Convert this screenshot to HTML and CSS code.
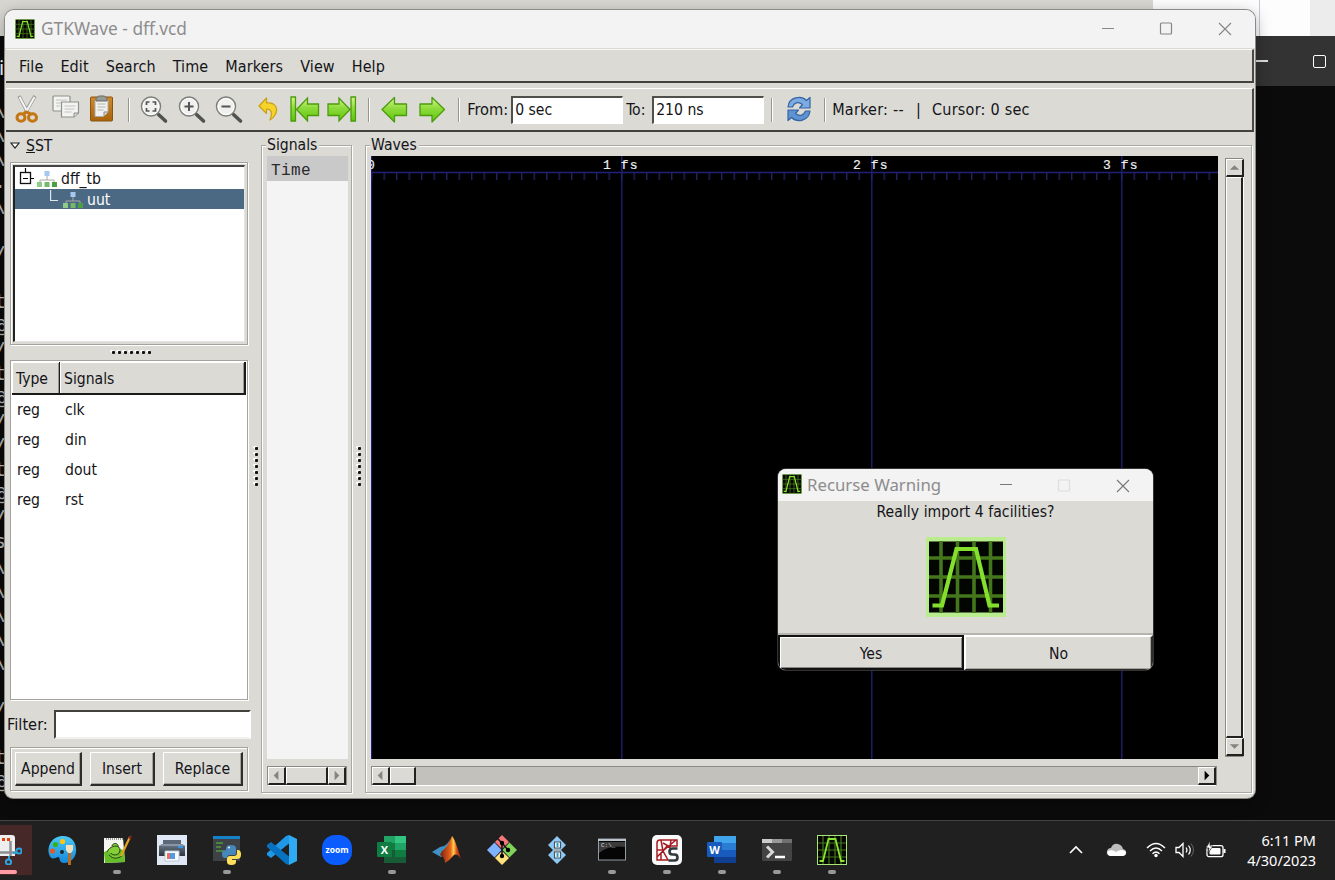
FILE: index.html
```html
<!DOCTYPE html>
<html lang="en">
<head>
<meta charset="utf-8">
<title>GTKWave - dff.vcd</title>
<link rel="stylesheet" href="styles.css">
</head>
<body>
<svg class="defs" width="0" height="0">
  <defs>
    <linearGradient id="green" x1="0" y1="0" x2="0" y2="1"><stop offset="0" stop-color="#d8f58a"/><stop offset=".45" stop-color="#8edb3c"/><stop offset="1" stop-color="#5fc40c"/></linearGradient>
    <linearGradient id="brown" x1="0" y1="0" x2="0" y2="1"><stop offset="0" stop-color="#d08a2c"/><stop offset="1" stop-color="#a8640c"/></linearGradient>
    <linearGradient id="steel" x1="0" y1="0" x2="0" y2="1"><stop offset="0" stop-color="#6e7a88"/><stop offset="1" stop-color="#2c3642"/></linearGradient>
    <linearGradient id="flame" x1="0" y1="0" x2="1" y2="0"><stop offset="0" stop-color="#7a1d10"/><stop offset=".5" stop-color="#e8641c"/><stop offset=".65" stop-color="#ffd04a"/><stop offset=".8" stop-color="#d8481c"/><stop offset="1" stop-color="#8e1c14"/></linearGradient>
    <linearGradient id="sky" x1="0" y1="0" x2="0" y2="1"><stop offset="0" stop-color="#4cc8f4"/><stop offset="1" stop-color="#1688dc"/></linearGradient>
    <symbol id="wave" viewBox="0 0 80 80">
      <rect width="80" height="80" fill="#b9ec8c"/><rect x="3" y="4.500" width="74" height="71" fill="#030600"/>
      <path d="M15 4v72M31.500 4v72M48 4v72M64.500 4v72M3 21h74M3 40h74M3 59h74" stroke="#44761c" stroke-width="3.600"/>
      <path d="M6.500 68.500H16L30.500 12H50L63.500 68.500H73" fill="none" stroke="#84e02c" stroke-width="4.200"/>
    </symbol>
    <symbol id="wave-small" viewBox="0 0 30 30">
      <rect width="30" height="30" fill="#a8e478"/><rect x="1" y="1" width="28" height="28" fill="#050800"/>
      <path d="M6 1v28M12 1v28M18 1v28M24 1v28M1 8h28M1 15h28M1 22h28" stroke="#47751e" stroke-width="1.200"/>
      <path d="M2.500 26H6L11.500 4H18.500L24 26H27.500" fill="none" stroke="#86e52c" stroke-width="1.800"/>
    </symbol>
    <symbol id="tree" viewBox="0 0 20 18">
      <path d="M10 6v4M3 12v-2h14v2" fill="none" stroke="#a8a8a0" stroke-width="1"/>
      <rect x="7.500" y="1" width="5" height="5" fill="#a4c8f0"/>
      <rect x="0" y="12" width="5" height="5" fill="#8ecb86"/><rect x="7.500" y="12" width="5" height="5" fill="#74b86a"/><rect x="15" y="12" width="5" height="5" fill="#4c9e44"/>
    </symbol>
    <symbol id="lens" viewBox="0 0 30 30">
      <path d="M19.500 19.500l7 6.500" stroke="#505450" stroke-width="3.600" stroke-linecap="round"/>
      <circle cx="12" cy="11.500" r="9.500" fill="#f0f0ee" stroke="#7c7f7a" stroke-width="1.500"/>
      <circle cx="12" cy="11.500" r="8" fill="none" stroke="#fff"/>
    </symbol>
    <symbol id="arrow" viewBox="0 0 30 30"><path d="M2 14.500L14.500 2.500V9H26.500V20.500H14.500V27Z" fill="url(#green)" stroke="#4a9c0c" stroke-width="1.300" stroke-linejoin="round"/></symbol>
    <symbol id="edge" viewBox="0 0 30 30"><path d="M1 2h4.500v24H1zM6.500 14.500L17.500 3V9H28.500V20.500H17.500V26Z" fill="url(#green)" stroke="#4a9c0c" stroke-width="1.300"/></symbol>
  </defs>
</svg>

<div class="desktop">
  <div class="sheet"><span class="sheet-line"></span><span class="sheet-edge"></span></div>
  <div class="console">
    <div class="console-bar"><i class="c-min"></i><i class="c-max"></i></div>
    <div class="console-tab">i</div>
    <pre class="console-text">\
\
\
.
\

/

t
@
/
t
@
/
/
t
@
/
s
\
\
\
\
\

/

t
@</pre>
  </div>

  <main class="window">
    <header class="titlebar">
      <svg class="app-icon"><use href="#wave-small"/></svg>
      <span class="title">GTKWave - dff.vcd</span>
      <svg class="controls" width="140" height="20" viewBox="0 0 140 20"><path d="M6 9.500h12" stroke="#888"/><rect x="64.500" y="4" width="11" height="11" rx="1" fill="none" stroke="#858585" stroke-width="1.200"/><path d="M123 4l12 12M135 4l-12 12" stroke="#858585" stroke-width="1.100"/></svg>
    </header>
    <nav class="menubar"><span>File</span><span>Edit</span><span>Search</span><span>Time</span><span>Markers</span><span>View</span><span>Help</span></nav>
    <div class="toolbar">
      <div class="tools">
        <svg viewBox="0 0 30 30"><path d="M7 1l9 17M23 1L13 18" stroke="#999b97" stroke-width="3.600"/><path d="M7.500 2l8 15M22.500 2L14 17" stroke="#f4f4f2" stroke-width="2"/><g fill="none" stroke="#c47612" stroke-width="3"><ellipse cx="9" cy="22.500" rx="4" ry="3.700"/><ellipse cx="20.500" cy="22.500" rx="4" ry="3.700"/><path d="M11.500 19l3-2 4 2"/></g></svg>
        <svg viewBox="0 0 30 30"><g fill="#f3f3f1" stroke="#8f918c" stroke-width="1.200"><rect x="3" y="1" width="17" height="15" rx="1"/><path d="M11.500 7H28.500V18L24 22H11.500Z"/></g><path d="M6 5h11M6 8h5M6 11h4M14.500 11h11M14.500 14h10M14.500 17h7" stroke="#c2c3be"/><path d="M24 22v-4h4" fill="#ddd" stroke="#8f918c"/></svg>
        <svg viewBox="0 0 30 30"><rect x="3.500" y="2" width="22" height="24" rx="1" fill="url(#brown)" stroke="#8c540c"/><path d="M8 5h13v12l-4.500 4.500H8z" fill="#f0f0ee" stroke="#aaa"/><path d="M10.500 9h8M10.500 12h8M10.500 15h6" stroke="#b5b6b2"/><path d="M9 6V3.500L11.500 1h6L20 3.500V6z" fill="#989a95" stroke="#686a66"/><path d="M17 21v-4h4" fill="#ddd" stroke="#888"/></svg>
      </div>
      <i class="sep"></i>
      <div class="tools">
        <svg viewBox="0 0 30 30"><use href="#lens"/><path d="M7.500 10V7h3M13.500 7h3v3M16.500 13v3h-3M10.500 16h-3v-3" fill="none" stroke="#555" stroke-width="1.700"/></svg>
        <svg viewBox="0 0 30 30"><use href="#lens"/><path d="M7.500 11.500h9M12 7v9" stroke="#555" stroke-width="2"/></svg>
        <svg viewBox="0 0 30 30"><use href="#lens"/><path d="M7.500 11.500h9" stroke="#555" stroke-width="2"/></svg>
        <svg viewBox="0 0 30 30"><path d="M7 11L14.500 3V8C23 7 27 13 23 20Q21 23.500 18 25Q22 14 14.500 14V18.500Z" fill="#f5d32a" stroke="#c9a010" stroke-width="1.200" stroke-linejoin="round"/></svg>
        <svg viewBox="0 0 30 30"><use href="#edge"/></svg>
        <svg viewBox="0 0 30 30"><use href="#edge" transform="matrix(-1 0 0 1 29.500 0)"/></svg>
      </div>
      <i class="sep"></i>
      <div class="tools arrows">
        <svg viewBox="0 0 30 30"><use href="#arrow"/></svg>
        <svg viewBox="0 0 30 30"><use href="#arrow" transform="matrix(-1 0 0 1 29.500 0)"/></svg>
      </div>
      <i class="sep tight"></i>
      <label class="from">From:</label><span class="entry">0 sec</span>
      <label class="to">To:</label><span class="entry">210 ns</span>
      <i class="sep near"></i>
      <svg class="reload" viewBox="0 0 30 30"><g fill="#7daae0" stroke="#3465a4" stroke-width="1.200" stroke-linejoin="round"><path d="M4 12C5 2 17 0 22.500 5.500L26 2.500V13H15.500L18.500 9.500C14 6 10 8 8.500 12Z"/><path d="M26 16C25 26 13 28 7.500 22.500L4 25.500V15H14.500L11.500 18.500C16 22 20 20 21.500 16Z" fill="#5f92d0"/></g></svg>
      <i class="sep last"></i>
      <span class="status">Marker: --</span><span class="status bar">|</span><span class="status">Cursor: 0 sec</span>
    </div>

    <div class="panes">
      <section class="left">
        <div class="sst"><svg width="10" height="7"><path d="M1 1h8L5 6Z" fill="#fff" stroke="#222" stroke-width="1.200"/></svg><span><u>S</u>ST</span></div>
        <div class="tree">
          <div class="tree-view">
            <div class="node"><svg class="expander" width="15" height="18"><path d="M6.500 0v4M12 10.500h3" stroke="#000" stroke-width="1.200"/><rect x="1.500" y="4.500" width="10" height="11" fill="#fff" stroke="#111" stroke-width="1.300"/><path d="M4 10.500h5" stroke="#000" stroke-width="1.200"/></svg><svg class="t-icon"><use href="#tree"/></svg><span>dff_tb</span></div>
            <div class="node child"><svg width="9" height="20"><path d="M.6 0v10.500H8" stroke="#dfe6ec" stroke-width="1.200" fill="none"/></svg><svg class="t-icon"><use href="#tree"/></svg><span>uut</span></div>
          </div>
        </div>
        <div class="grip-h"></div>
        <div class="list">
          <div class="list-head"><span>Type</span><span>Signals</span></div>
          <div class="row"><span>reg</span><span>clk</span></div>
          <div class="row"><span>reg</span><span>din</span></div>
          <div class="row"><span>reg</span><span>dout</span></div>
          <div class="row"><span>reg</span><span>rst</span></div>
        </div>
        <div class="filter"><label>Filter:</label><span class="filter-box"></span></div>
        <div class="actions"><button class="b-append">Append</button><button class="b-insert">Insert</button><button class="b-replace">Replace</button></div>
      </section>
      <div class="grip-v"></div>
      <section class="frame signals">
        <h2>Signals</h2>
        <div class="names"><div class="time">Time</div></div>
        <div class="hbar"><i class="btn"><svg viewBox="0 0 16 16"><path d="M10 3v10L5 8z" fill="#85857f"/></svg></i><i class="thumb"></i><i class="btn"><svg viewBox="0 0 16 16"><path d="M6 3v10l5-5z" fill="#85857f"/></svg></i></div>
      </section>
      <div class="grip-v second"></div>
      <section class="frame waves">
        <h2>Waves</h2>
        <div class="wave-row">
          <svg class="canvas" width="847" height="603">
            <defs><pattern id="ticks" width="12.500" height="8" patternUnits="userSpaceOnUse" y="16"><path d="M.75 0v8" stroke="#26266e" stroke-width="1.200"/></pattern></defs>
            <rect width="847" height="603" fill="#000"/>
            <rect y="16" width="847" height="8" fill="url(#ticks)"/>
            <path d="M0 16.500h847M.5 0v603M250.800 0v603M500.800 0v603M750.800 0v603" stroke="#20207a" stroke-width="1.300"/>
            <g class="scale"><text x="-4" y="13">0</text><text x="232" y="13">1 fs</text><text x="482" y="13">2 fs</text><text x="732" y="13">3 fs</text></g>
          </svg>
          <div class="vbar"><i class="btn"><svg viewBox="0 0 16 16"><path d="M3 10.500h10L8 5.500z" fill="#85857f"/></svg></i><i class="thumb"></i><i class="btn"><svg viewBox="0 0 16 16"><path d="M3 5.500h10L8 10.500z" fill="#85857f"/></svg></i></div>
        </div>
        <div class="hbar wide"><i class="btn"><svg viewBox="0 0 16 16"><path d="M10 3v10L5 8z" fill="#85857f"/></svg></i><i class="thumb"></i><i class="btn end"><svg viewBox="0 0 16 16"><path d="M6 3v10l5-5z" fill="#000"/></svg></i></div>
      </section>
    </div>
  </main>

  <div class="dialog">
    <header class="dialog-bar">
      <svg class="app-icon"><use href="#wave-small"/></svg><span class="title">Recurse Warning</span>
      <svg class="controls" width="140" height="20" viewBox="0 0 140 20"><path d="M6 9.500h12" stroke="#777"/><rect x="64.500" y="5" width="11" height="11" rx="1" fill="none" stroke="#ddd" stroke-width="1.200"/><path d="M123 5l12 12M135 5l-12 12" stroke="#777" stroke-width="1.100"/></svg>
    </header>
    <div class="dialog-body"><p>Really import 4 facilities?</p><svg width="80" height="80"><use href="#wave"/></svg></div>
    <div class="dialog-actions"><button class="yes">Yes</button><button class="no">No</button></div>
  </div>

  <footer class="taskbar">
    <div class="apps">
      <div class="app snip"><svg viewBox="0 0 30 30"><path d="M0 0h20q3 0 3 3v18H0z" fill="#eee"/><path d="M0 4.500h19" stroke="#e04010" stroke-width="3" stroke-dasharray="3 2"/><path d="M18.500 6v15M7 17.500h17" stroke="#8a8f94" stroke-width="2.500"/><g fill="none" stroke="#2aa4e0" stroke-width="2"><circle cx="27" cy="16" r="2.600"/><circle cx="16.500" cy="27" r="2.600"/><path d="M21 18h4M17 21v4"/></g></svg></div>
      <div class="app"><svg viewBox="0 0 30 30"><path d="M16 1C5 1 0 11 2 19c2 7 6 4 9 3 3 0 0 6 6 6 8 0 13-7 12-15C28 5 23 1 16 1Z" fill="url(#sky)"/><circle cx="5.500" cy="16" r="2.600" fill="#e05a28"/><circle cx="8.500" cy="9.500" r="2.600" fill="#35b218"/><circle cx="15.500" cy="6.500" r="2.600" fill="#ffc414"/><circle cx="15" cy="17" r="2" fill="#20262c"/><path d="M22.500 16v14" stroke="#b86c20" stroke-width="3"/><path d="M19 10h7v5l-2 3h-3l-2-3z" fill="#f1dfbd"/></svg></div>
      <div class="app run"><svg viewBox="0 0 30 30"><path d="M2 3h19l2 24-21 1z" fill="#f6f6f0"/><path d="M2 17q9-5 20-2l1 12-20 1z" fill="#65bd28"/><path d="M4 4h17" stroke="#999" stroke-width="2" stroke-dasharray="1 1"/><path d="M5 17c3-7 13-8 13-2s-8 6-9 3M10 11c1-4 7-3 6 1M7 20c5 5 9 3 13 1" fill="#84ce38" stroke="#263e14" stroke-width="1"/><path d="M19 21L28 2" stroke="#e4a321" stroke-width="2.200"/><path d="M27.500 4L29 1" stroke="#8c2020" stroke-width="2"/></svg></div>
      <div class="app"><svg viewBox="0 0 30 30"><rect width="30" height="30" fill="#e1e8f5"/><path d="M6 5h18v7H6z" fill="#5b6877"/><path d="M2 11l3-2h20l3 2v10H2z" fill="url(#steel)"/><path d="M2 11l3-2h20l3 2z" fill="#8895a5"/><rect x="21" y="11" width="5" height="2" fill="#3394e8"/><path d="M8 16h14v10H8z" fill="#fafcff" stroke="#bcc8d5"/><path d="M10 18h6v6h-6z" fill="#e5745c"/><path d="M13 18h5v6h-5z" fill="#5799df"/></svg></div>
      <div class="app run"><svg viewBox="0 0 30 30"><path d="M1 1h27v25H1z" fill="#3e4145"/><path d="M1 1h27v3H1z" fill="#1682c8"/><path d="M4 8h7M4 12h5M4 16h8" stroke="#4e9d3b" stroke-width="1.500"/><path d="M14 16V13q0-3 5-3t5 3v5q0 2-2 2h-4q-3 0-3 3h-2q-3 0-3-4t4-4h6" fill="#4688bc"/><path d="M25 15h1q3 0 3 4.500t-4 4.500h-5v1h4v2q0 3-4.500 3t-4.500-3v-3q0-3 3-3h4q3 0 3-3z" fill="#ffdf5b"/><circle cx="17" cy="12.500" r="1" fill="#fff"/></svg></div>
      <div class="app"><svg viewBox="0 0 30 30"><path d="M22 0L30 4V26L22 30Z" fill="#2fabf4"/><path d="M22 0V8.500L4 23 0 20V18L19 1Z" fill="#2098e8"/><path d="M0 10l4-3L22 21.500V30L19 29 0 12z" fill="#0871c0"/></svg></div>
      <div class="app zoom"><svg viewBox="0 0 30 30"><rect width="30" height="30" rx="13" fill="#0b5cff"/><text x="15" y="17.500">zoom</text></svg></div>
      <div class="app run"><svg viewBox="0 0 30 30"><path d="M7 1h22v27H7z" fill="#185c37"/><path d="M7 1h11v7H7z" fill="#21a366"/><path d="M18 1h11v7H18z" fill="#33c481"/><path d="M7 8h11v7H7z" fill="#107c41"/><path d="M18 8h11v7H18z" fill="#21a366"/><path d="M18 15h11v7H18z" fill="#107c41"/><rect y="7" width="15" height="15" rx="1" fill="#107c41"/><text class="office" x="7.500" y="18.500">X</text></svg></div>
      <div class="app"><svg viewBox="0 0 30 30"><path d="M0 17l8-5 4-1q4-2 6-7l-3 13-6 5z" fill="#3f91c4"/><path d="M10 16Q15 13 20 1Q23 4 29 24Q24 17 21 21Q17 26 13 28Q13 22 8 20z" fill="url(#flame)"/></svg></div>
      <div class="app"><svg viewBox="0 0 30 30"><path d="M15 0l7 7-7 7-7-7z" fill="#f7777b"/><path d="M7.500 7.500l7 7.500-7 7.500L0 15z" fill="#80b3ff"/><path d="M22.500 7.500L30 15l-7.500 7.500-7-7.500z" fill="#80d25a"/><path d="M15 16l7 7-7 7-7-7z" fill="#ffe27b"/><path d="M9 2l6 6v13M15 8l6 7" fill="none" stroke="#201c1c" stroke-width="1.700"/><circle cx="15" cy="8" r="2.200"/><circle cx="15" cy="21" r="2.200"/><circle cx="21" cy="15" r="2.200"/></svg></div>
      <div class="app"><svg viewBox="0 0 30 30"><path d="M15 1l9 9-5 5 5 5-9 9-9-9 5-5-5-5z" fill="#8ec9f5"/><path d="M12.500 7h6v6h-6zM12.500 17h6v6h-6z" fill="#fff" stroke="#44515c" stroke-width="1.200"/><path d="M15.500 8v4M15.500 18v4" stroke="#2b9fc4" stroke-width="2"/><path d="M12 15h7" stroke="#aaa" stroke-width="2"/></svg></div>
      <div class="app run cmd"><svg viewBox="0 0 30 30"><rect x="1.500" y="4" width="27" height="21" fill="#050505" stroke="#939ba3"/><path d="M1 4h28v2H1z" fill="#bcc4cb"/><path d="M2 7h26v5Q12 10 2 18z" fill="#3a3a3a"/><text x="4" y="11.500">C:\_</text></svg></div>
      <div class="app run"><svg viewBox="0 0 30 30"><rect width="30" height="30" rx="5" fill="#fafafa"/><path d="M5 25V8q0-3 3-3h17v6H15l-4 5 5 9zM5 15h7L24 5M5 22l6-6-2-11M11 8l7 4 1-7M9 25v-7" fill="none" stroke="#a61b20" stroke-width="1.500"/><path d="M25.500 13.500h-5q-3 0-3 3t3 3h2q3 0 3 3t-3 3h-6" fill="none" stroke="#30383c" stroke-width="2.600"/></svg></div>
      <div class="app run"><svg viewBox="0 0 30 30"><path d="M7 1h22v7H7z" fill="#41a5ee"/><path d="M7 8h22v7H7z" fill="#2b7cd3"/><path d="M7 15h22v7H7z" fill="#185abd"/><path d="M7 22h22v6H7z" fill="#103f91"/><rect y="7" width="15" height="15" rx="1" fill="#185abd"/><text class="office" x="7.500" y="18.500">W</text></svg></div>
      <div class="app run"><svg viewBox="0 0 30 30"><rect y="4" width="30" height="22" rx="1.500" fill="#444"/><path d="M0 4h10v4H0z" fill="#ccc"/><path d="M10 4h10v4H10z" fill="#999"/><path d="M20 4h10v4H20z" fill="#707070"/><path d="M5 11.500l5.500 5.500L5 22.500" fill="none" stroke="#d8d8d8" stroke-width="3"/><path d="M13 22h10" stroke="#fff" stroke-width="2.500"/></svg></div>
      <div class="app run"><svg viewBox="0 0 30 30"><use href="#wave-small"/></svg></div>
    </div>
    <div class="tray">
      <svg width="14" height="10"><path d="M1 8l6-6 6 6" fill="none" stroke="#fff" stroke-width="1.600"/></svg>
      <svg width="21" height="14"><path d="M4 13q-4-1-3-5 1-3 4-3 2-5 7-4 4 1 5 5 4 1 3 5-1 2-4 2z" fill="#bdbdbd"/><path d="M4 13q-4-2-2-5 4-2 8 1 6-4 10 0 0 4-4 4z" fill="#fff"/></svg>
      <svg width="20" height="16"><g fill="none" stroke="#fff" stroke-width="1.400"><path d="M1 6q9-9 18 0M4 9q6-6 12 0M6.500 11.700q3.500-3.500 7 0"/></g><circle cx="10" cy="13.500" r="1.700" fill="#fff"/></svg>
      <svg width="20" height="16"><path d="M1 5.500h3l4-4v13l-4-4H1z" fill="none" stroke="#fff" stroke-width="1.300"/><path d="M11 5.500q2 2.500 0 5M13.500 3.500q3.500 4.500 0 9" fill="none" stroke="#fff" stroke-width="1.200"/><path d="M16 1.500q5 6.500 0 13" fill="none" stroke="#666"/></svg>
      <svg width="20" height="17"><rect x="1" y="4.700" width="16" height="11" rx="2" fill="none" stroke="#fff" stroke-width="1.300"/><rect x="3.500" y="7" width="11" height="6.500" rx="1" fill="#fff"/><path d="M18.500 8v4" stroke="#fff" stroke-width="2"/><path d="M4 0L0 7h3l-1 5 5-7H4z" fill="#fff" stroke="#202020" stroke-width=".7"/></svg>
      <div class="clock"><span>6:11 PM</span><span>4/30/2023</span></div>
    </div>
  </footer>
</div>
</body>
</html>
```
FILE: styles.css
```css
* { box-sizing: border-box; }
body { margin: 0; font-family: "DejaVu Sans Condensed", "DejaVu Sans", sans-serif; font-size: 15.600px; font-stretch: condensed; color: #141418; }
svg { display: block; flex: none; }
i { display: block; flex: none; }
.defs { position: absolute; }
.desktop { position: relative; width: 1335px; height: 880px; overflow: hidden; background: #d9d7d2; }

.sheet { position: absolute; left: 1153px; top: 0; width: 182px; height: 36px; display: flex; justify-content: space-between; background: #fdfdfd; }
.sheet-line { width: 1px; margin-left: 106px; background: #c8c8d8; }
.sheet-edge { width: 25px; background: #ececec; }
.console { position: absolute; left: 0; top: 36px; width: 1335px; height: 784px; background: #0b0b0b; }
.console-bar { height: 50px; display: flex; align-items: center; justify-content: flex-end; background: linear-gradient(90deg, #0b0b0b 50%, #333 50%); padding-right: 9px; gap: 45px; }
.c-min { width: 12px; height: 2px; background: #ddd; }
.c-max { width: 13px; height: 13px; border: 1.5px solid #fff; border-radius: 2px; }
.console-tab { position: absolute; left: -1px; top: 20px; color: #fff; font: 20px/24px "Noto Sans", sans-serif; }
.console-text { position: absolute; left: -6px; top: 61px; margin: 0; color: #bbb; font: 20px/24px "DejaVu Sans Mono", monospace; }

.window { position: absolute; left: 5px; top: 10px; width: 1250px; height: 788px; border-radius: 9px 9px 8px 8px; background: #dbdad5; overflow: hidden; display: flex; flex-direction: column; box-shadow: 0 0 0 1px #8a8a88, 0 4px 16px rgba(0,0,0,.35); }
.titlebar { height: 38px; flex: none; display: flex; align-items: center; padding: 0 19px 0 10px; background: #f3f3f3; }
.app-icon { width: 20px; height: 20px; }
.title { margin-left: 6px; flex: 1; color: #8d8d8d; font: 17.300px/24px "Noto Sans", sans-serif; }
.menubar { height: 34px; flex: none; margin: 1px 1px 0; padding: 1px 13px 0; display: flex; align-items: center; gap: 17px; font-size: 16px; letter-spacing: .1px; border-top: 1px solid #f8f8f6; border-right: 2px solid #4a4945; border-bottom: 2px solid #42413e; }
.toolbar { height: 44px; flex: none; margin: 5px 1px 0; display: flex; align-items: center; border-top: 1px solid #fff; border-right: 2px solid #4a4945; border-bottom: 2px solid #42413e; padding-left: 6px; white-space: nowrap; }
.tools { display: flex; gap: 7.600px; }
.tools svg, .reload { width: 30px; height: 30px; }
.arrows { gap: 7px; margin-left: 1px; }
.sep { width: 2px; height: 24px; margin: 0 9px 0 11px; border-left: 1px solid #96958f; border-right: 1px solid #fff; }
.sep.tight { margin-right: 7px; }
.sep.last { margin: 0 6px 0 10px; }
.entry { width: 112px; height: 28px; padding-left: 2px; line-height: 25px; background: #fff; border: 1px solid #fff; border-top: 2px solid #504f4a; border-left: 2px solid #504f4a; }
.from { width: 44px; font-size: 16.300px; }
.to { width: 26px; margin-left: 3px; }
.sep.near { margin-left: 7px; margin-right: 11px; }
.status { font-size: 16px; letter-spacing: .25px; }
.bar { margin: 0 11px 0 12px; }

.panes { flex: 1; display: flex; min-height: 0; }
.left { width: 246px; display: flex; flex-direction: column; }
.sst { height: 30px; padding: 0 0 3px 5px; display: flex; align-items: center; gap: 6px; }
.tree { width: 238px; height: 183px; margin: 0 0 0 5px; padding: 2px; border: 1px solid #a3a29d; box-shadow: 1px 1px #fff, inset 1px 1px #fff; }
.tree-view { height: 100%; background: #fff; border: 1px solid #e4e3df; border-top: 2px solid #444; border-left: 2px solid #222; }
.node { height: 22px; display: flex; align-items: center; padding: 1px 0 0 4px; }
.expander { margin-bottom: 3px; }
.t-icon { width: 20px; height: 18px; margin: 0 4px 0 3px; }
.child { height: 20px; padding-left: 35px; background: #4b6983; color: #fff; }
.child .t-icon { margin-left: 4px; }
.grip-h { width: 42px; height: 4px; margin: 5px 0 6px 105px; background: radial-gradient(circle at 3.5px 2.5px, #111 1.3px, transparent 1.8px) 0 0 / 6px 5px, radial-gradient(circle at 2px 1px, #fff 1.5px, transparent 1.8px) 0 0 / 6px 5px; }
.list { width: 238px; height: 340px; margin-left: 5px; padding: 1px; background: #fff; border: 1px solid #a3a29d; box-shadow: 1px 1px #fff; }
.list-head { height: 33px; display: flex; background: #dbdad5; border-bottom: 2px solid #1a1a1a; }
.list-head span { border-right: 1px solid #1a1a1a; box-shadow: inset 1px 1px #fff, inset -1px 0 #999; padding: 0 0 0 4px; line-height: 35px; }
.list-head span:first-child { width: 48px; }
.list-head span:last-child { flex: 1; border-right-width: 2px; padding-left: 4px; }
.row { height: 30px; line-height: 30px; display: flex; padding-left: 5px; }
.row span:first-child { width: 48px; }
.filter { height: 29px; margin-top: 10px; display: flex; align-items: center; padding-left: 2px; }
.filter label { width: 47px; font-size: 16.300px; }
.filter-box { width: 197px; height: 29px; background: #fff; border: 2px solid #42413e; border-right-color: #fff; border-bottom-color: #f0f0ee; }
.actions { width: 238px; height: 44px; margin: 8px 0 0 5px; padding: 4px; display: flex; justify-content: space-between; border: 1px solid #a3a29d; box-shadow: 1px 1px #fff, inset 1px 1px #fff; }
button { font: inherit; color: inherit; padding: 0; background: #dbdad5; border: 1px solid #fff; border-right: 2px solid #2e2d2a; border-bottom: 2px solid #2e2d2a; box-shadow: inset -1px -1px #a5a49f; }
.actions button { height: 34px; padding-top: 1px; }
.b-append { width: 67px; }
.b-insert { width: 65px; }
.b-replace { width: 80px; }
.grip-v { width: 5px; height: 42px; margin: 314px 5px 0 2px; background: radial-gradient(circle at 3.5px 2.5px, #111 1.3px, transparent 1.8px) 0 0 / 5px 6px, radial-gradient(circle at 2px 1px, #fff 1.5px, transparent 1.8px) 0 0 / 5px 6px; }
.grip-v.second { margin: 314px 4px 0 4px; }
.frame { margin: 13px 0 4px; border: 1px solid #a9a8a3; box-shadow: inset 1px 1px #fff, 1px 1px #fff; height: 648px; padding: 0 4px 0 5px; }
.frame h2 { margin: -12px 0 0 -1px; width: max-content; padding: 0 2px 0 1px; background: #dbdad5; font-size: 15.600px; font-weight: 400; line-height: 22px; height: 22px; }
.signals { width: 91px; margin-left: -2px; }
.waves { width: 887px; }
.names { width: 81px; height: 603px; background: #f4f4f4; }
.time { height: 25px; padding-left: 4px; background: #c9c9c9; color: #2a2a2c; font: 16px/31px "Liberation Mono", monospace; letter-spacing: .4px; }
.wave-row { display: flex; gap: 7px; }
.scale { fill: #eee; font: 13px "Liberation Mono", monospace; letter-spacing: 1.100px; white-space: pre; stroke: #eee; stroke-width: .2px; }
.hbar { margin-top: 7px; width: 80px; height: 20px; display: flex; background: #c2c1bb; border: 1px solid #8b8a85; border-bottom-color: #fff; }
.wide { width: 846px; }
.btn { width: 18px; height: 18px; background: #dbdad5; border: 1px solid #fff; border-right: 2px solid #22211f; border-bottom: 2px solid #22211f; }
.thumb { width: 42px; background: #dbdad5; border: 1px solid #fff; border-right: 2px solid #22211f; border-bottom: 2px solid #22211f; }
.wide .thumb { width: 26px; }
.wide .end { margin-left: auto; }
.vbar { width: 19px; height: 599px; margin-top: 2px; display: flex; flex-direction: column; border: 1px solid #8b8a85; border-right-color: #fff; }
.vbar .thumb { width: 100%; flex: 1; }

.dialog { position: absolute; left: 778px; top: 469px; width: 375px; height: 201px; border-radius: 8px; overflow: hidden; display: flex; flex-direction: column; background: #dbdad5; box-shadow: 0 0 0 1px #333; }
.dialog-bar { height: 32px; display: flex; align-items: center; padding: 0 19px 0 4px; background: #f3f3f3; }
.dialog-bar .app-icon { margin-bottom: 2px; }
.dialog-bar .title { margin-left: 5px; font-size: 16.800px; }
.dialog-body { height: 134px; display: flex; flex-direction: column; align-items: center; border-bottom: 2px solid #b5b4ae; }
.dialog-body p { margin: 0; line-height: 22px; padding-bottom: 14px; letter-spacing: .05px; }
.dialog-actions { flex: 1; display: flex; }
.dialog-actions button { padding-top: 2px; }
.yes { width: 186px; border: 2px solid #111; box-shadow: inset 1px 1px #fff, inset -1px -1px #888; }
.no { flex: 1; border-width: 2px; border-bottom-width: 1px; }

.taskbar { position: absolute; left: 0; top: 820px; width: 1335px; height: 60px; background: #202020; border-top: 1px solid #444; display: flex; justify-content: space-between; }
.apps { display: flex; margin-left: -21px; }
.app { width: 55px; padding-top: 14px; display: flex; flex-direction: column; align-items: center; gap: 5px; }
.app svg { width: 30px; height: 30px; }
.run::after { content: ""; width: 8px; height: 4px; border-radius: 2px; background: #999; }
.snip { background: linear-gradient(#472829, #472829) 0 4px / 53px 50px no-repeat; border-radius: 6px; }
.snip::after { content: ""; width: 20px; height: 4px; border-radius: 2px; background: #ff9ba5; }
.zoom text { font: 700 8.500px "Open Sans", sans-serif; fill: #fff; text-anchor: middle; }
.office { font: 700 11px "Open Sans", sans-serif; fill: #fff; text-anchor: middle; }
.cmd text { font: 6px "Liberation Mono", monospace; fill: #ddd; }
.tray { display: flex; align-items: center; padding: 0 19px 2px 0; color: #fff; }
.tray svg:nth-child(1) { margin-right: 23px; }
.tray svg:nth-child(2) { margin-right: 19px; }
.tray svg:nth-child(3) { margin-right: 9px; }
.tray svg:nth-child(4) { margin-right: 11px; }
.clock { width: 90px; display: flex; flex-direction: column; align-items: flex-end; font: 14.500px/20px "Noto Sans", sans-serif; }
```
